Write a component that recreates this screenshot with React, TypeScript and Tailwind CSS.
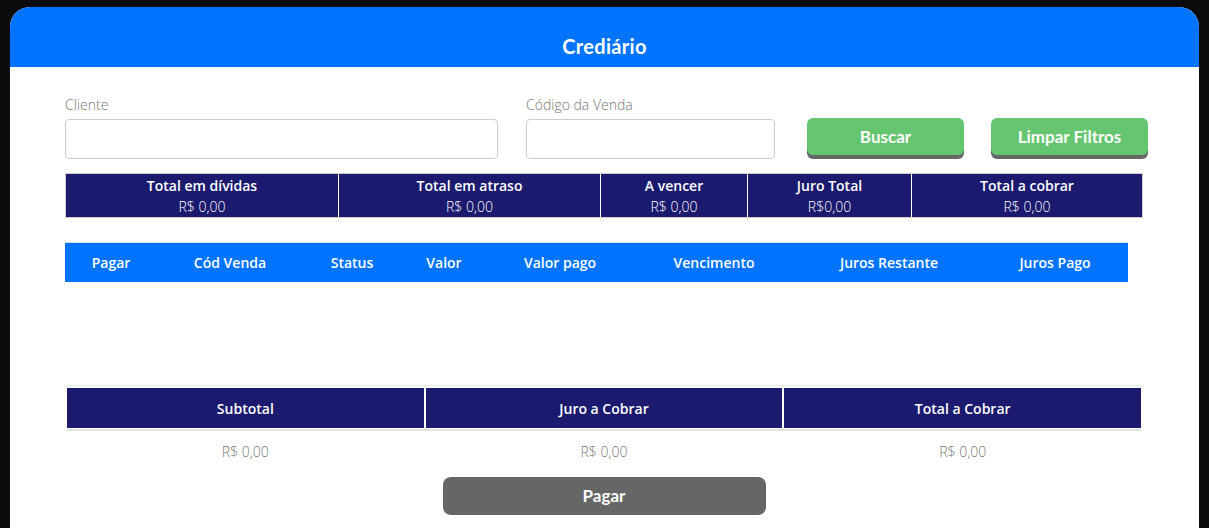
import React from 'react';

const summary = [
  { label: 'Total em dívidas', value: 'R$ 0,00', w: 'w-[272px]' },
  { label: 'Total em atraso', value: 'R$ 0,00', w: 'w-[262px]' },
  { label: 'A vencer', value: 'R$ 0,00', w: 'w-[147px]' },
  { label: 'Juro Total', value: 'R$0,00', w: 'w-[164px]' },
  { label: 'Total a cobrar', value: 'R$ 0,00', w: 'flex-1' },
];

const columns = [
  { label: 'Pagar', w: 'w-[92px]' },
  { label: 'Cód Venda', w: 'w-[146px]' },
  { label: 'Status', w: 'w-[98px]' },
  { label: 'Valor', w: 'w-[86px]' },
  { label: 'Valor pago', w: 'w-[146px]' },
  { label: 'Vencimento', w: 'w-[162px]' },
  { label: 'Juros Restante', w: 'w-[188px]' },
  { label: 'Juros Pago', w: 'w-[144px]' },
];

const totals = ['Subtotal', 'Juro a Cobrar', 'Total a Cobrar'];

export default function App() {
  return (
    <div className="h-[528px] overflow-hidden bg-[#0b0b0b] pt-[7px] pl-[10px] font-['Open_Sans',sans-serif]">
      <div className="w-[1189px] h-[600px] rounded-t-[20px] bg-white overflow-hidden">
        {/* Header */}
        <div className="h-[60px] bg-[#0074ff] pt-[25px] text-center">
          <h1 className="text-[20px] leading-[28px] font-bold text-white font-['Lato',sans-serif] tracking-[0.3px]">
            Crediário
          </h1>
        </div>

        <div className="pl-[55px] pr-[40px] pt-[28px]">
          {/* Filters */}
          <div className="flex items-end">
            <div className="w-[433px] shrink-0">
              <label className="block text-[14px] leading-[20px] font-light text-[#777] mb-[4px]">Cliente</label>
              <input className="block w-full h-[40px] border border-[#ccc] rounded-[4px] outline-none" />
            </div>
            <div className="w-[249px] shrink-0 ml-[28px]">
              <label className="block text-[14px] leading-[20px] font-light text-[#777] mb-[4px]">Código da Venda</label>
              <input className="block w-full h-[40px] border border-[#ccc] rounded-[4px] outline-none" />
            </div>
            <button className="shrink-0 ml-[32px] mb-[4px] w-[157px] h-[37px] rounded-[6px] bg-[#66c571] shadow-[0_4px_0_#666] text-white font-bold text-[17px] font-['Lato',sans-serif]">
              Buscar
            </button>
            <button className="shrink-0 ml-[27px] mb-[4px] w-[157px] h-[37px] rounded-[6px] bg-[#66c571] shadow-[0_4px_0_#666] text-white font-bold text-[17px] font-['Lato',sans-serif]">
              Limpar Filtros
            </button>
          </div>

          {/* Summary */}
          <div className="mt-[14px] w-[1078px] flex border border-[#ccc] bg-[#1b1a6e]">
            {summary.map((s, i) => (
              <div
                key={s.label}
                className={`${s.w} h-[43px] flex flex-col items-center justify-center text-white ${i > 0 ? 'border-l border-white' : ''}`}
              >
                <span className="text-[14px] leading-[21px] font-semibold">{s.label}</span>
                <span className="text-[14px] leading-[21px] font-light">{s.value}</span>
              </div>
            ))}
          </div>

          {/* Installments table */}
          <div className="mt-[24px] w-[1063px] h-[40px] flex items-center bg-[#0074ff] border-t border-[#ddd]">
            {columns.map((c) => (
              <div key={c.label} className={`${c.w} text-center text-white text-[14px] font-semibold`}>
                {c.label}
              </div>
            ))}
          </div>

          <div className="h-[103px]" />

          {/* Totals */}
          <div className="w-[1078px] border-t border-[#e5e5e5] p-[2px] pb-0">
            <div className="flex gap-[2px]">
              {totals.map((t) => (
                <div
                  key={t}
                  className="flex-1 h-[40px] flex items-center justify-center bg-[#1b1a6e] text-white text-[14px] font-semibold"
                >
                  {t}
                </div>
              ))}
            </div>
            <div className="mt-[1px] h-[2px] bg-[#e3e3e3]" />
            <div className="flex gap-[2px]">
              {totals.map((t) => (
                <div key={t} className="flex-1 h-[40px] flex items-center justify-center text-[14px] font-light text-[#777]">
                  R$ 0,00
                </div>
              ))}
            </div>
          </div>

          <div className="mt-[6px] flex justify-center w-[1078px]">
            <button className="w-[323px] h-[38px] rounded-[8px] bg-[#666] text-white font-bold text-[17px] font-['Lato',sans-serif]">
              Pagar
            </button>
          </div>
        </div>
      </div>
    </div>
  );
}
